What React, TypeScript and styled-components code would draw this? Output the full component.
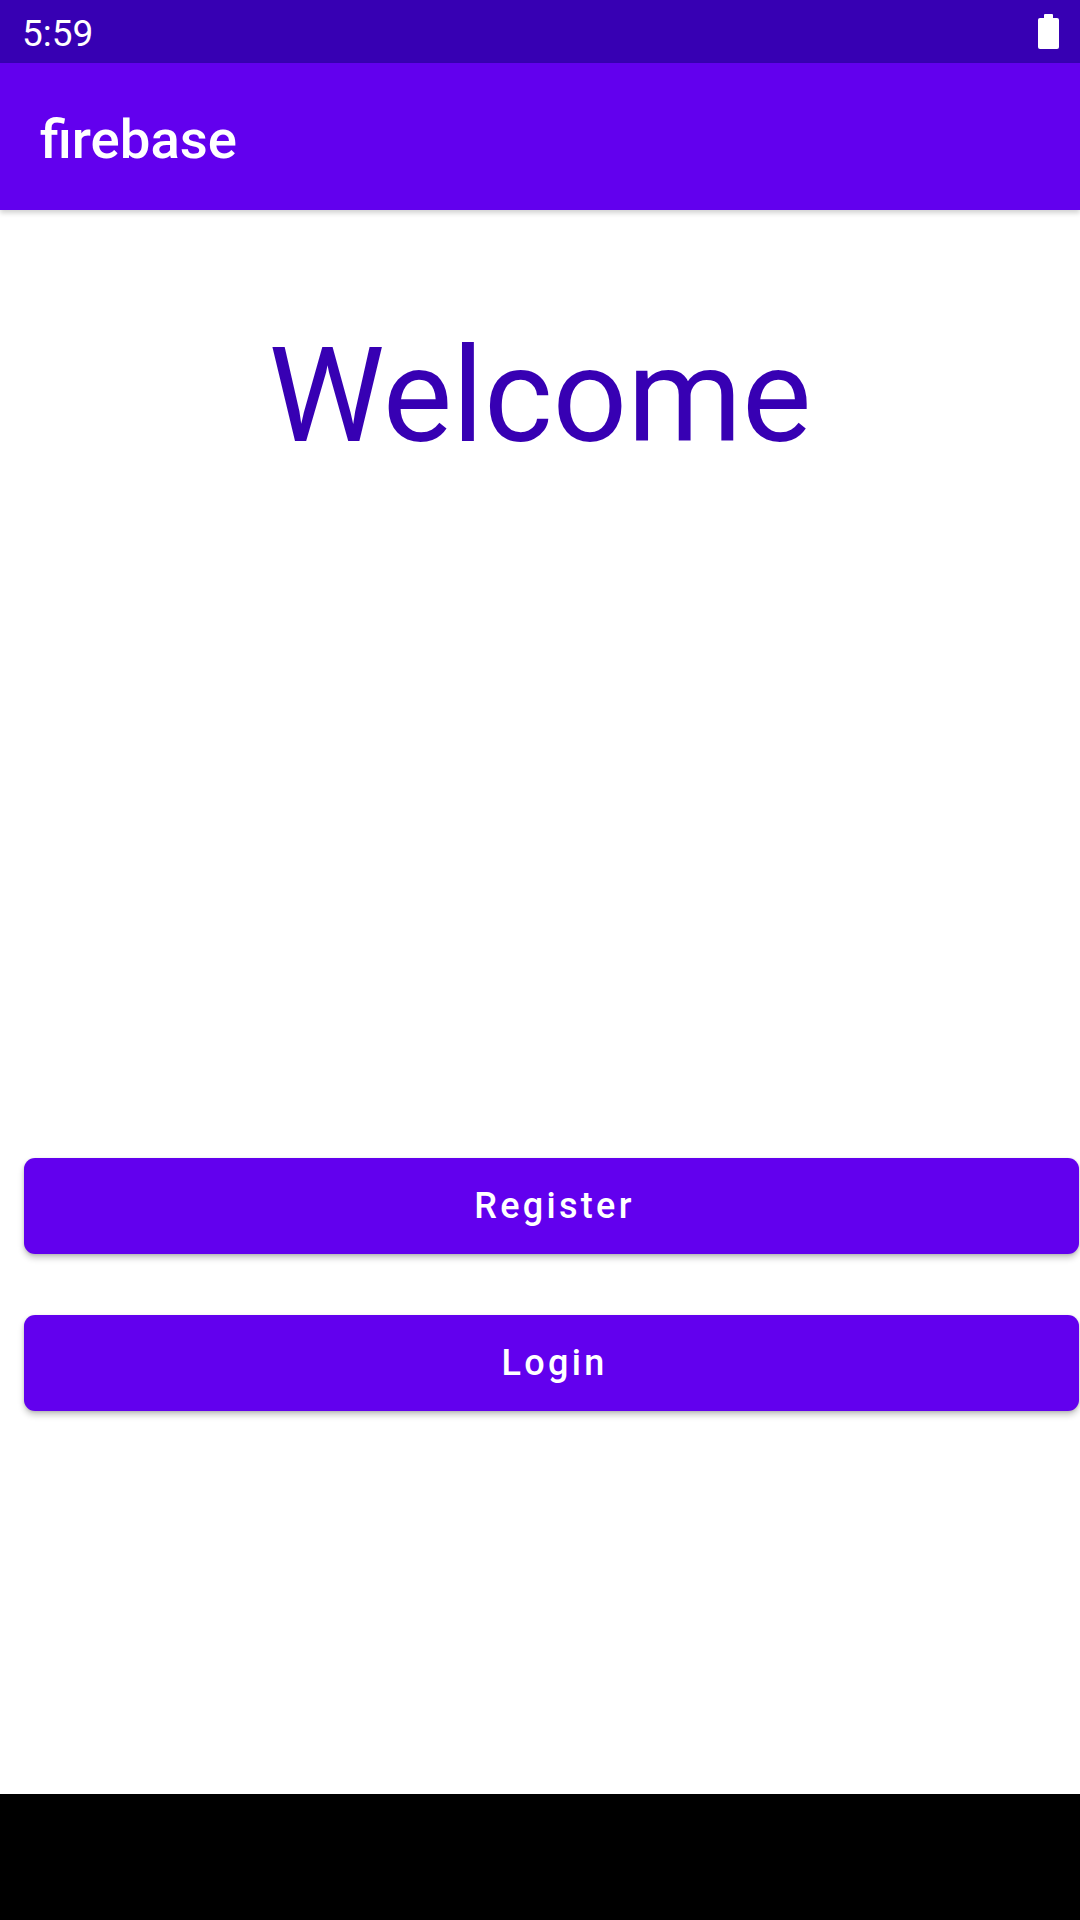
import React from 'react'
import styled, { createGlobalStyle } from 'styled-components'

const GlobalStyle = createGlobalStyle`
  html, body {
    margin: 0;
    padding: 0;
    background: #ffffff;
  }
  body {
    font-family: Roboto, 'Noto Sans', sans-serif;
  }
`

const Screen = styled.div`
  width: 1080px;
  height: 1920px;
  display: flex;
  flex-direction: column;
  overflow: hidden;
  background: #ffffff;
`

const StatusBar = styled.div`
  height: 63px;
  flex-shrink: 0;
  box-sizing: border-box;
  padding: 15px 21px 0 22px;
  background: #3700b3;
  display: flex;
  justify-content: space-between;
  align-items: flex-start;
`

const Clock = styled.span`
  font-size: 37px;
  line-height: 1;
  color: #ffffff;
`

const Battery = styled.svg`
  margin-top: -1px;
`

const AppBar = styled.header`
  height: 147px;
  flex-shrink: 0;
  box-sizing: border-box;
  padding: 49px 0 0 40px;
  background: #6200ee;
  box-shadow: 0 3px 5px rgba(0, 0, 0, 0.18);
  position: relative;
  z-index: 1;
`

const Title = styled.h1`
  margin: 0;
  font-size: 54.5px;
  font-weight: 500;
  line-height: 1;
  color: #ffffff;
`

const Content = styled.main`
  flex: 1;
  display: flex;
  flex-direction: column;
`

const Welcome = styled.div`
  margin-top: 121px;
  text-align: center;
  font-size: 131px;
  line-height: 1;
  color: #3700b3;
`

const Actions = styled.div`
  margin-top: auto;
  margin-bottom: 383px;
  padding: 0 1px 0 24px;
  display: flex;
  flex-direction: column;
  gap: 61px;
`

const ActionButton = styled.button`
  height: 96px;
  border: none;
  border-radius: 11px;
  padding: 0 0 0 6px;
  background: #6200ee;
  color: #ffffff;
  font-family: Roboto, 'Noto Sans', sans-serif;
  font-size: 36px;
  font-weight: 500;
  letter-spacing: 3.3px;
  line-height: 1;
  display: flex;
  align-items: center;
  justify-content: center;
  box-shadow: 0 4px 6px rgba(0, 0, 0, 0.22), 0 1px 3px rgba(0, 0, 0, 0.12);
  cursor: pointer;
`

const NavBar = styled.div`
  height: 126px;
  flex-shrink: 0;
  background: #000000;
`

export default function App() {
  return (
    <>
      <GlobalStyle />
      <Screen>
        <StatusBar>
          <Clock>5:59</Clock>
          <Battery width='21' height='35' viewBox='0 0 21 35'>
            <rect x='6' y='0' width='9' height='5' rx='1' fill='#ffffff' />
            <rect x='0' y='4' width='21' height='31' rx='2' fill='#ffffff' />
          </Battery>
        </StatusBar>
        <AppBar>
          <Title>firebase</Title>
        </AppBar>
        <Content>
          <Welcome>Welcome</Welcome>
          <Actions>
            <ActionButton>Register</ActionButton>
            <ActionButton>Login</ActionButton>
          </Actions>
        </Content>
        <NavBar />
      </Screen>
    </>
  )
}
